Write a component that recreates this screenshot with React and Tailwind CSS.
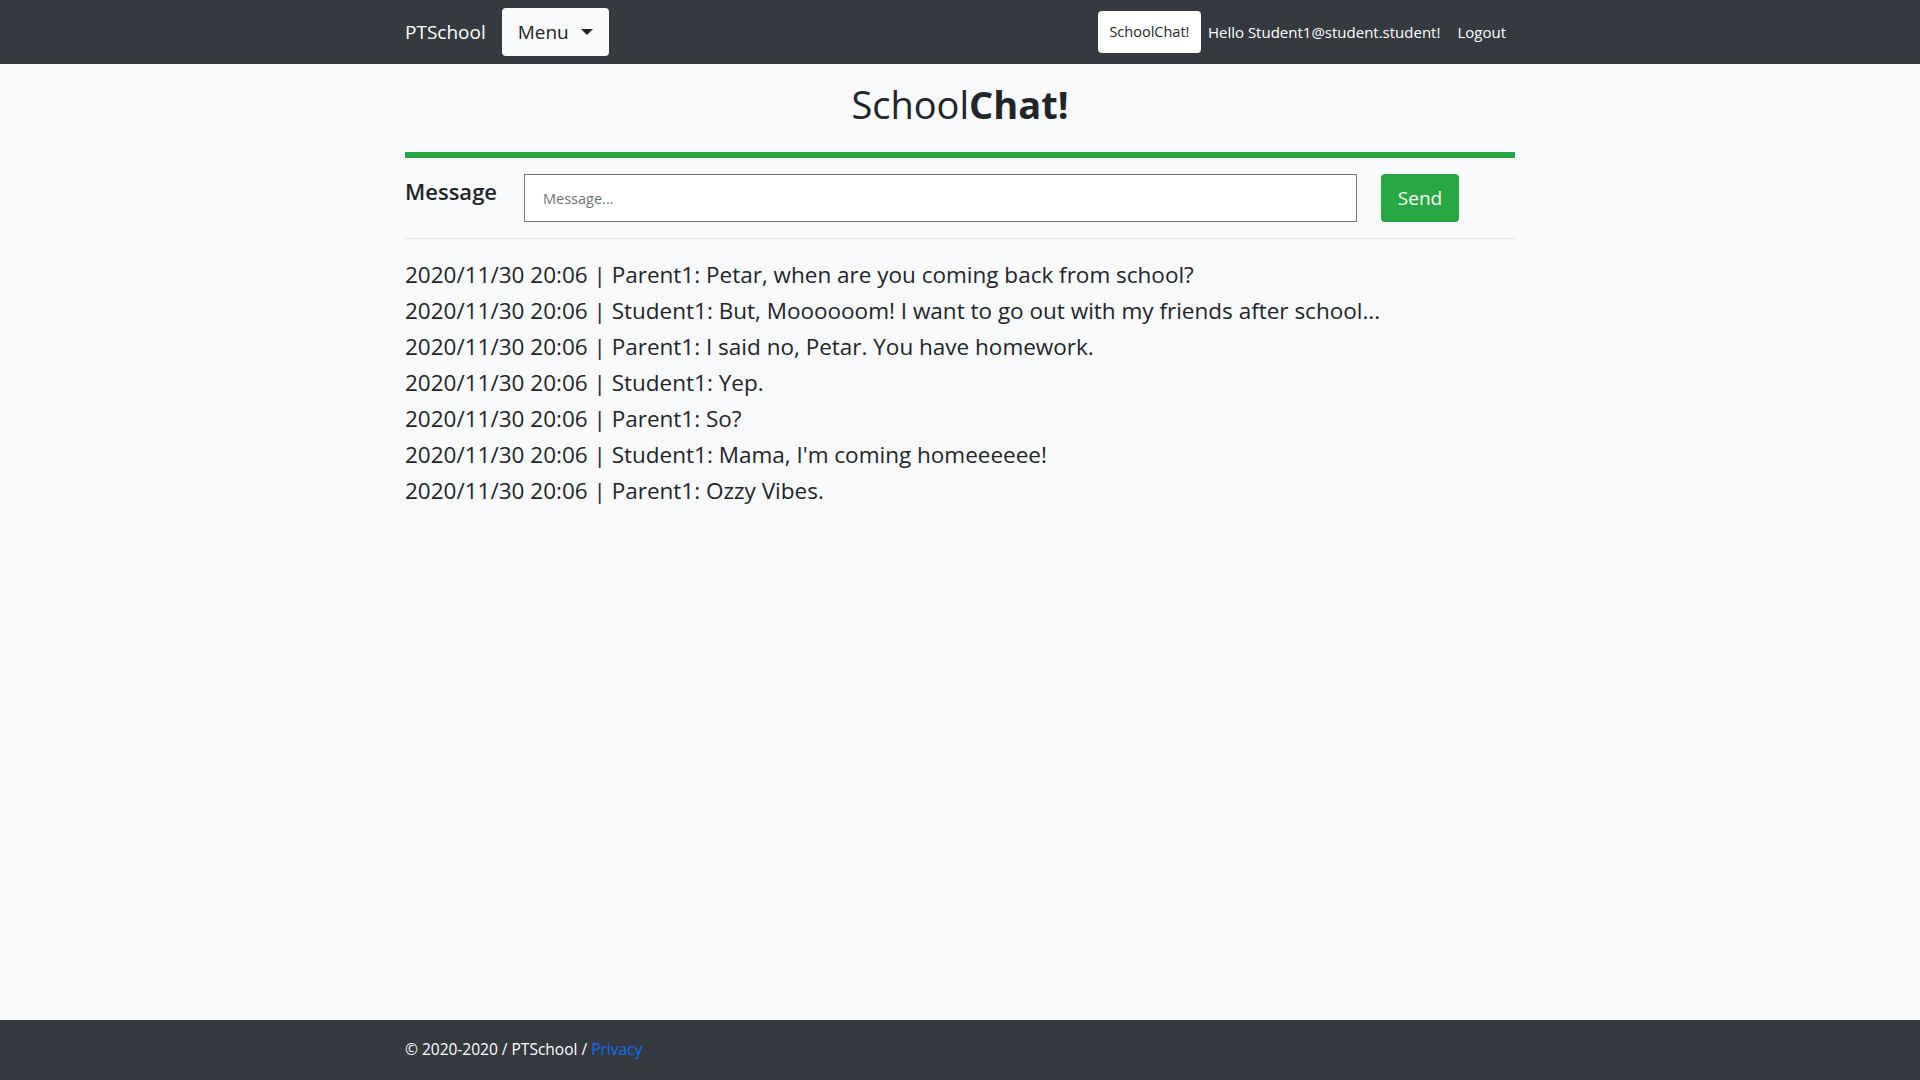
import React from "react";

const messages = [
  "2020/11/30 20:06 | Parent1: Petar, when are you coming back from school?",
  "2020/11/30 20:06 | Student1: But, Moooooom! I want to go out with my friends after school...",
  "2020/11/30 20:06 | Parent1: I said no, Petar. You have homework.",
  "2020/11/30 20:06 | Student1: Yep.",
  "2020/11/30 20:06 | Parent1: So?",
  "2020/11/30 20:06 | Student1: Mama, I'm coming homeeeeee!",
  "2020/11/30 20:06 | Parent1: Ozzy Vibes.",
];

export default function App() {
  return (
    <div
      className="min-h-screen flex flex-col bg-[#f8f9fa] text-[#212529]"
      style={{ fontFamily: '"Open Sans", "Noto Sans", sans-serif' }}
    >
      <nav className="h-[64px] bg-[#343a40] shrink-0">
        <div className="w-[1110px] mx-auto h-full flex items-center">
          <span className="text-[19px] text-white mr-[16px]">PTSchool</span>
          <button className="h-[48px] w-[107px] rounded-[4px] bg-[#f8f9fa] text-[#212529] text-[19px] flex items-center justify-center gap-[12px]">
            <span>Menu</span>
            <span className="inline-block w-0 h-0 border-l-[6px] border-r-[6px] border-t-[6px] border-l-transparent border-r-transparent border-t-[#212529]"></span>
          </button>
          <div className="ml-auto flex items-center h-full">
            <button className="h-[42px] w-[103px] rounded-[4px] bg-white text-[#212529] text-[14.5px] flex items-center justify-center">
              SchoolChat!
            </button>
            <span className="text-white text-[15px] ml-[7px]">Hello Student1@student.student!</span>
            <span className="text-white text-[15px] ml-[17px] mr-[9px]">Logout</span>
          </div>
        </div>
      </nav>

      <main className="flex-1">
        <div className="w-[1110px] mx-auto">
          <h1 className="pt-[16px] text-center text-[38px] leading-[48px] font-medium text-[#212529]">
            School<span className="font-bold">Chat!</span>
          </h1>
          <div className="mt-[24px] h-[6px] bg-[#28a745]"></div>
          <div className="mt-[16px] flex items-start">
            <label className="w-[119px] shrink-0 text-[22px] leading-[34px] font-semibold whitespace-nowrap">Message</label>
            <input
              className="w-[833px] shrink-0 h-[48px] bg-white border border-[#767676] px-[18px] text-[14.5px] text-[#212529] placeholder:text-[#6c757d] outline-none"
              placeholder="Message..."
            />
            <button className="ml-[24px] shrink-0 w-[78px] h-[48px] rounded-[4px] bg-[#28a745] text-white text-[19px]">
              Send
            </button>
          </div>
          <div className="mt-[16px] h-px bg-[#dee2e6]"></div>
          <div className="mt-[18px]">
            {messages.map((m, i) => (
              <div key={i} className="text-[22.5px] leading-[36px]">
                {m}
              </div>
            ))}
          </div>
        </div>
      </main>

      <footer className="h-[60px] bg-[#343a40] shrink-0">
        <div className="w-[1110px] mx-auto h-full flex items-center text-white text-[15.5px]">
          © 2020-2020 / PTSchool /&nbsp;<a className="text-[#0d6efd]">Privacy</a>
        </div>
      </footer>
    </div>
  );
}
